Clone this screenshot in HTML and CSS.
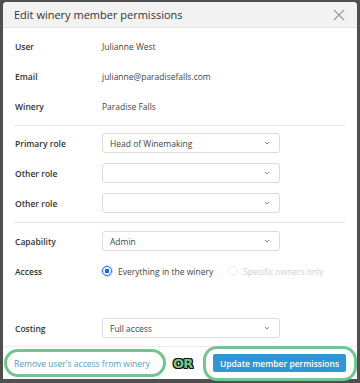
FILE: index.html
```html
<!DOCTYPE html>
<html lang="en">
<head>
    <meta charset="UTF-8">
    <meta name="viewport" content="width=device-width, initial-scale=1.0">
    <title>Edit winery member permissions</title>
    <link rel="stylesheet" href="styles.css">
</head>
<body>
    <div class="modal">
        <div class="modal-header">
            <div class="modal-title">Edit winery member permissions</div>
            <svg class="close" width="12" height="12" viewBox="0 0 12 12">
                <path d="M1 1L11 11M11 1L1 11" stroke="#9a9a9a" stroke-width="1.2" fill="none"/>
            </svg>
        </div>

        <div class="section first">
            <div class="row">
                <div class="label">User</div>
                <div class="value">Julianne West</div>
            </div>
            <div class="row">
                <div class="label">Email</div>
                <div class="value">julianne@paradisefalls.com</div>
            </div>
            <div class="row">
                <div class="label">Winery</div>
                <div class="value">Paradise Falls</div>
            </div>
        </div>

        <div class="section roles">
            <div class="row">
                <div class="label">Primary role</div>
                <div class="select">
                    <span>Head of Winemaking</span>
                    <svg class="chevron" width="6" height="4" viewBox="0 0 6 4"><path d="M1 1L3 3L5 1" stroke="#777" stroke-width="0.9" fill="none"/></svg>
                </div>
            </div>
            <div class="row">
                <div class="label">Other role</div>
                <div class="select">
                    <span></span>
                    <svg class="chevron" width="6" height="4" viewBox="0 0 6 4"><path d="M1 1L3 3L5 1" stroke="#777" stroke-width="0.9" fill="none"/></svg>
                </div>
            </div>
            <div class="row">
                <div class="label">Other role</div>
                <div class="select">
                    <span></span>
                    <svg class="chevron" width="6" height="4" viewBox="0 0 6 4"><path d="M1 1L3 3L5 1" stroke="#777" stroke-width="0.9" fill="none"/></svg>
                </div>
            </div>
        </div>

        <div class="section access">
            <div class="row">
                <div class="label">Capability</div>
                <div class="select">
                    <span>Admin</span>
                    <svg class="chevron" width="6" height="4" viewBox="0 0 6 4"><path d="M1 1L3 3L5 1" stroke="#777" stroke-width="0.9" fill="none"/></svg>
                </div>
            </div>
            <div class="row spaced">
                <div class="label">Access</div>
                <div class="radio-group">
                    <span class="radio checked"></span>
                    <span class="radio-text">Everything in the winery</span>
                    <span class="radio disabled"></span>
                    <span class="radio-text muted">Specific owners only</span>
                </div>
            </div>
            <div class="row">
                <div class="label">Costing</div>
                <div class="select">
                    <span>Full access</span>
                    <svg class="chevron" width="6" height="4" viewBox="0 0 6 4"><path d="M1 1L3 3L5 1" stroke="#777" stroke-width="0.9" fill="none"/></svg>
                </div>
            </div>
        </div>

        <div class="footer">
            <div class="highlight link-wrap">
                <a class="link" href="#">Remove user's access from winery</a>
            </div>
            <div class="or">OR</div>
            <div class="highlight btn-wrap">
                <button class="btn">Update member permissions</button>
            </div>
        </div>
    </div>
</body>
</html>
```

FILE: styles.css
```css
body {
    margin: 0;
    padding: 2px 3px 0 3px;
    width: 360px;
    height: 383px;
    box-sizing: border-box;
    background-color: #4f4f4f;
    font-family: 'Open Sans', 'Noto Sans', sans-serif;
    font-size: 8.5px;
    color: #444;
    overflow: hidden;
}

.modal {
    width: 354px;
    height: 377px;
    background-color: #fff;
    border-radius: 4px 4px 0 0;
    display: flex;
    flex-direction: column;
}

.modal-header {
    height: 25px;
    background-color: #f2f2f2;
    border-bottom: 1px solid #e2e2e2;
    border-radius: 4px 4px 0 0;
    display: flex;
    align-items: center;
    justify-content: space-between;
    padding: 0 12px 0 11px;
}

.modal-title {
    font-size: 11px;
    color: #333;
}

.close {
    margin-top: 1px;
}

.section {
    margin: 0 12px 0 11px;
    border-bottom: 1px solid #e6e6e6;
}

.section.first {
    padding: 3px 0 4px;
}

.section.roles {
    padding: 2px 0 4px;
}

.section.access {
    padding: 3px 0 3px;
    border-bottom: none;
}

.row {
    height: 30px;
    display: grid;
    grid-template-columns: 88px 1fr;
    align-items: center;
}

.row.spaced {
    margin-bottom: 27px;
}

.label {
    font-weight: 600;
    color: #333;
    padding-left: 1px;
}

.value {
    color: #444;
}

.select {
    width: 178px;
    height: 20px;
    box-sizing: border-box;
    border: 1px solid #dcdcdc;
    border-radius: 3px;
    display: flex;
    align-items: center;
    justify-content: space-between;
    padding: 0 9px 0 7px;
    color: #444;
}

.radio-group {
    display: flex;
    align-items: center;
}

.radio {
    width: 10px;
    height: 10px;
    box-sizing: border-box;
    border-radius: 50%;
    display: inline-block;
}

.radio.checked {
    border: 1.5px solid #1a6fe0;
    background: radial-gradient(circle, #1a6fe0 0 2.2px, #fff 2.6px);
    box-shadow: 0 0 0 1px #c8dcf5;
}

.radio.disabled {
    border: 1px solid #ececec;
    margin-left: 15px;
}

.radio-text {
    margin-left: 6px;
    color: #444;
}

.radio-text.muted {
    color: #cfcfcf;
    margin-left: 5px;
}

.footer {
    height: 32px;
    border-top: 1px solid #ececec;
    display: flex;
    align-items: center;
    padding-left: 1px;
}

.highlight {
    border: 3px solid #72c58e;
    box-sizing: border-box;
    border-radius: 14px;
    display: flex;
    align-items: center;
}

.link-wrap {
    width: 162px;
    height: 28px;
    padding-left: 7px;
}

.link {
    color: #4f9dc7;
    text-decoration: none;
}

.or {
    margin-left: 7px;
    width: 24px;
    font-family: 'DejaVu Sans', sans-serif;
    font-weight: bold;
    font-size: 13px;
    letter-spacing: -0.8px;
    color: #74c48c;
    text-shadow: 1px 0 0 #111, -1px 0 0 #111, 0 1px 0 #111, 0 -1px 0 #111,
        1px 1px 0 #111, -1px -1px 0 #111, 1px -1px 0 #111, -1px 1px 0 #111;
}

.btn-wrap {
    margin-left: 6px;
    width: 154px;
    height: 35px;
    padding-left: 7px;
}

.btn {
    width: 133px;
    height: 18px;
    border: none;
    border-radius: 2px;
    background-color: #2f97d5;
    color: #fff;
    font-family: 'Open Sans', 'Noto Sans', sans-serif;
    font-size: 8.5px;
    font-weight: 600;
    padding: 0;
}
```
